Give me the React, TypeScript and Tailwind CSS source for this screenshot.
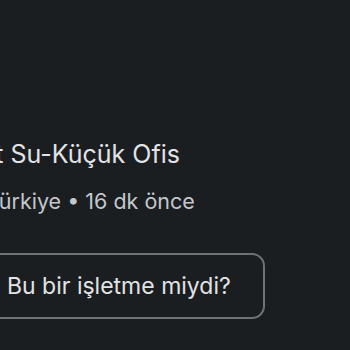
export default function App() {
  return (
    <div
      className="w-[350px] h-[350px] bg-[#1b1e21] overflow-hidden flex flex-col"
      style={{ fontFamily: "Inter, 'Noto Sans', sans-serif" }}
    >
      <div className="pt-[137px] flex flex-col">
        <div className="text-[25px] leading-[34px] text-[#e2e3e5] whitespace-nowrap -ml-[65px]">
          Hayat Su-Küçük Ofis
        </div>
        <div className="mt-[16px] text-[21.5px] leading-[28px] text-[#c4c7cb] whitespace-nowrap -ml-[14px]">
          Türkiye • 16 dk önce
        </div>
      </div>
      <div className="mt-[38px] -ml-[20px] w-[285px] h-[66px] rounded-[13px] border-2 border-[#6f7276] flex items-center pl-[25px]">
        <span className="text-[23px] text-[#e2e3e5] whitespace-nowrap">Bu bir işletme miydi?</span>
      </div>
    </div>
  );
}
